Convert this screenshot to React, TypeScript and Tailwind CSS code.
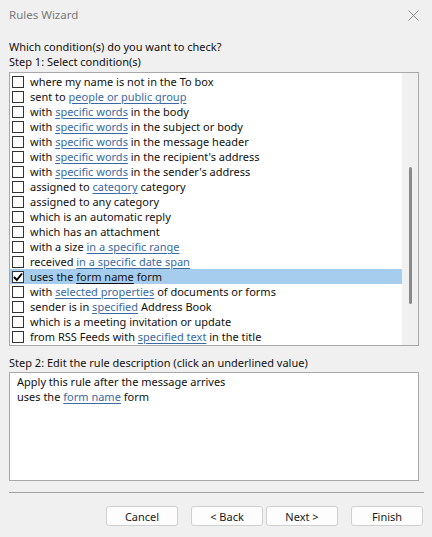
import React from "react";

type Part = string | { link: string };

const conditions: Part[][] = [
  ["where my name is not in the To box"],
  ["sent to ", { link: "people or public group" }],
  ["with ", { link: "specific words" }, " in the body"],
  ["with ", { link: "specific words" }, " in the subject or body"],
  ["with ", { link: "specific words" }, " in the message header"],
  ["with ", { link: "specific words" }, " in the recipient's address"],
  ["with ", { link: "specific words" }, " in the sender's address"],
  ["assigned to ", { link: "category" }, " category"],
  ["assigned to any category"],
  ["which is an automatic reply"],
  ["which has an attachment"],
  ["with a size ", { link: "in a specific range" }],
  ["received ", { link: "in a specific date span" }],
  ["uses the ", { link: "form name" }, " form"],
  ["with ", { link: "selected properties" }, " of documents or forms"],
  ["sender is in ", { link: "specified" }, " Address Book"],
  ["which is a meeting invitation or update"],
  ["from RSS Feeds with ", { link: "specified text" }, " in the title"],
];

const SELECTED = 13;

function Checkbox({ checked }: { checked: boolean }) {
  return (
    <div className="w-[12px] h-[12px] border border-[#333333] bg-white flex items-center justify-center shrink-0">
      {checked && (
        <svg width="10" height="10" viewBox="0 0 10 10">
          <path d="M1 5 L3.8 8 L9 1.5" fill="none" stroke="#000" strokeWidth="2" />
        </svg>
      )}
    </div>
  );
}

function Row({ parts, selected }: { parts: Part[]; selected: boolean }) {
  return (
    <div
      className={
        "h-[15px] flex items-center gap-[6px] pl-[2px] " +
        (selected ? "bg-[#a6cdee]" : "")
      }
    >
      <Checkbox checked={selected} />
      <span className="whitespace-nowrap leading-[15px]">
        {parts.map((p, i) =>
          typeof p === "string" ? (
            <span key={i}>{p}</span>
          ) : (
            <span
              key={i}
              className={
                "underline underline-offset-2 " +
                (selected ? "text-[#111]" : "text-[#3a6aa3]")
              }
            >
              {p.link}
            </span>
          )
        )}
      </span>
    </div>
  );
}

function Btn({ label }: { label: string }) {
  return (
    <button
      type="button"
      className="w-[72px] h-[20px] rounded-[3px] border border-[#d0d0d0] bg-[#fdfdfd] text-[11px] text-[#1a1a1a] leading-none"
    >
      {label}
    </button>
  );
}

export default function App() {
  return (
    <div
      className="w-[432px] h-[537px] bg-[#f0f0f0] text-[11px] text-[#111] flex flex-col"
      style={{ fontFamily: '"Noto Sans", "Open Sans", sans-serif' }}
    >
      <div className="h-[30px] flex items-center justify-between pl-[9px] pr-[13px]">
        <span className="text-[#7a7a7a] text-[11.5px]">Rules Wizard</span>
        <svg width="11" height="11" viewBox="0 0 11 11">
          <path d="M0.5 0.5 L10.5 10.5 M10.5 0.5 L0.5 10.5" stroke="#8a8a8a" strokeWidth="1" />
        </svg>
      </div>

      <div className="pl-[9px] pr-[13px] pt-[9px] flex flex-col">
        <div className="h-[15px] leading-[15px]">Which condition(s) do you want to check?</div>
        <div className="h-[15px] leading-[15px]">Step 1: Select condition(s)</div>

        <div className="mt-[3px] h-[274px] border border-[#a8a8a8] bg-white flex">
          <div className="flex-1 pt-px overflow-hidden">
            {conditions.map((c, i) => (
              <Row key={i} parts={c} selected={i === SELECTED} />
            ))}
          </div>
          <div className="w-[16px] bg-[#f0f0f0] flex justify-center">
            <div className="w-[3px] h-[137px] mt-[94px] rounded-full bg-[#8a8a8a]" />
          </div>
        </div>

        <div className="h-[15px] leading-[15px] mt-[9px]">
          Step 2: Edit the rule description (click an underlined value)
        </div>
        <div className="mt-[2px] h-[109px] border border-[#a8a8a8] bg-white px-[7px] pt-px">
          <div className="h-[15px] leading-[15px]">Apply this rule after the message arrives</div>
          <div className="h-[15px] leading-[15px]">
            uses the{" "}
            <span className="underline underline-offset-2 text-[#3a6aa3]">form name</span> form
          </div>
        </div>
      </div>

      <div className="ml-[9px] mr-[8px] mt-[11px] h-px bg-[#a0a0a0]" />

      <div className="flex justify-end pr-[9px] mt-[13px]">
        <Btn label="Cancel" />
        <div className="ml-[13px] flex gap-[3px]">
          <Btn label="< Back" />
          <Btn label="Next >" />
        </div>
        <div className="ml-[13px]">
          <Btn label="Finish" />
        </div>
      </div>
    </div>
  );
}
